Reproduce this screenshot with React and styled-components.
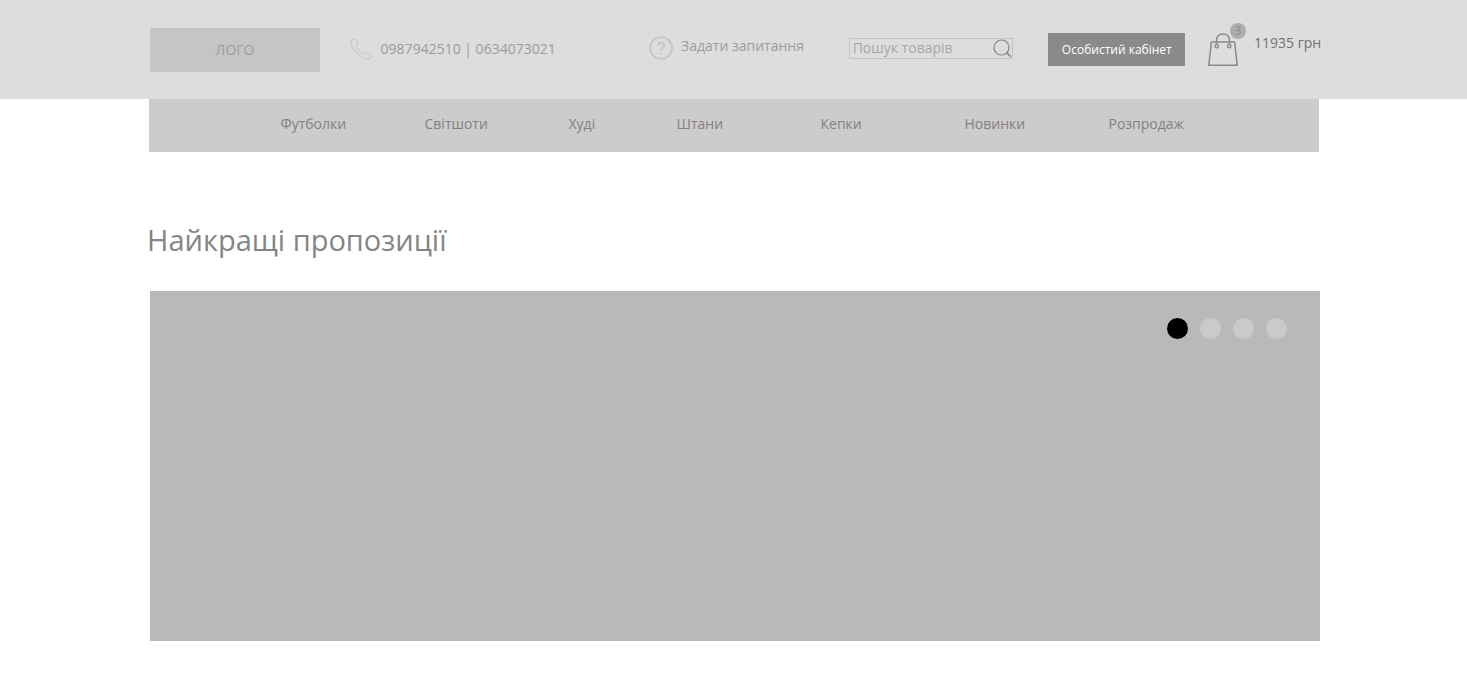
import React, { useState } from 'react';
import styled, { createGlobalStyle } from 'styled-components';

const categories = [
  'Футболки',
  'Світшоти',
  'Худі',
  'Штани',
  'Кепки',
  'Новинки',
  'Розпродаж',
];

const slides = [1, 2, 3, 4];

const PhoneIcon = () => (
  <svg width="22" height="22" viewBox="0 0 22 22" fill="none" stroke="#c3cad2" strokeWidth="1.2">
    <path d="M1.6 2.4C2.6 1 4.4.6 5.4 1.4C6.4 2.3 7.6 4 7.8 5.2C7.9 6.6 6.2 7.2 6.3 8.4C6.6 10 8 11.6 9.4 13C10.9 14.4 12.3 15.6 13.6 15.8C14.9 15.9 15.4 14.2 16.8 14.3C18.2 14.6 19.8 15.8 20.8 16.8C21.6 18 21 19.6 19.8 20.4C18.6 21.2 17 21.3 15.6 20.8C12.4 19.6 9.2 17.4 6.6 14.8C4 12.2 2 9.2 1 6.2C.6 4.8.8 3.4 1.6 2.4Z" />
  </svg>
);

const QuestionIcon = () => (
  <svg width="24" height="24" viewBox="0 0 24 24" fill="none" stroke="#c4c8cd">
    <circle cx="12" cy="12" r="11" strokeWidth="2" />
    <path d="M8.9 9.6C8.9 7.6 10.3 6.7 12 6.7C13.8 6.7 15.1 7.8 15.1 9.4C15.1 11.8 12 11.6 12 14.8" strokeWidth="2" />
    <circle cx="12" cy="17.8" r="1.3" fill="#c4c8cd" stroke="none" />
  </svg>
);

const SearchIcon = () => (
  <svg width="19" height="19" viewBox="0 0 19 19" fill="none" stroke="#858585">
    <circle cx="8.5" cy="8.5" r="7.5" strokeWidth="1.2" />
    <path d="M13.6 13.6L17.8 17.8" strokeWidth="1.5" />
  </svg>
);

const BagIcon = () => (
  <svg width="30" height="34" viewBox="0 0 30 34" fill="none" stroke="#8a8a8a">
    <path d="M3.4 9H26.6L29.2 32.3H.8Z" strokeWidth="1.5" />
    <path d="M8.5 12V7.5C8.5 3.6 11 1 15 1C19 1 21.5 3.6 21.5 7.5V12" strokeWidth="1.5" />
    <circle cx="8.7" cy="13.2" r="1.7" strokeWidth="1.3" />
    <circle cx="21.3" cy="13.2" r="1.7" strokeWidth="1.3" />
  </svg>
);

const App = () => {
  const [active, setActive] = useState(1);
  const [query, setQuery] = useState('');

  return (
    <>
      <GlobalStyle />
      <Header>
        <HeaderGrid>
          <Logo href="#">ЛОГО</Logo>
          <Phones>
            <PhoneIcon />
            <span>0987942510 | 0634073021</span>
          </Phones>
          <Ask href="#ask">
            <QuestionIcon />
            <span>Задати запитання</span>
          </Ask>
          <Search onSubmit={(e) => e.preventDefault()}>
            <SearchInput
              type="text"
              aria-label="Пошук товарів"
              placeholder="Пошук товарів"
              value={query}
              onChange={(e) => setQuery(e.target.value)}
            />
            <SearchButton type="submit" aria-label="Пошук">
              <SearchIcon />
            </SearchButton>
          </Search>
          <AccountButton type="button">Особистий кабінет</AccountButton>
          <Cart href="#cart">
            <Bag>
              <BagIcon />
              <Badge>3</Badge>
            </Bag>
            <span>11935 грн</span>
          </Cart>
        </HeaderGrid>
      </Header>
      <Nav>
        {categories.map((name) => (
          <NavLink key={name} href="#">
            {name}
          </NavLink>
        ))}
      </Nav>
      <Main>
        <Title>Найкращі пропозиції</Title>
        <Banner>
          {slides.map((slide) => (
            <Dot
              key={slide}
              type="button"
              aria-label={`Слайд ${slide}`}
              $active={slide === active}
              onClick={() => setActive(slide)}
            />
          ))}
        </Banner>
      </Main>
    </>
  );
};

export default App;

const GlobalStyle = createGlobalStyle`
  * {
    box-sizing: border-box;
  }
  body {
    margin: 0;
    background-color: #ffffff;
    font-family: 'Open Sans', 'Noto Sans', sans-serif;
    font-size: 14px;
    line-height: 20px;
    color: #858080;
  }
  a {
    color: inherit;
    text-decoration: none;
  }
  button,
  input {
    font: inherit;
  }
  svg {
    display: block;
    flex-shrink: 0;
  }
`;
const Header = styled.header`
  background-color: #dddddd;
`;
const HeaderGrid = styled.div`
  display: grid;
  grid-template-columns: 200fr 300fr 200fr 200fr 160fr 114px;
  align-items: center;
  max-width: 1177px;
  margin: 0 auto;
  padding: 28px 0 27px 5px;
  color: #a09b9b;
  white-space: nowrap;
`;
const Logo = styled.a`
  display: flex;
  align-items: center;
  justify-content: center;
  width: 170px;
  height: 44px;
  background-color: #c5c5c5;
`;
const Phones = styled.div`
  display: flex;
  align-items: center;
  gap: 9px;
  margin-bottom: 2px;
`;
const Ask = styled.a`
  display: flex;
  align-items: flex-start;
  gap: 8px;
  margin-bottom: 4px;
`;
const Search = styled.form`
  display: flex;
  align-items: center;
  width: 164px;
  height: 21px;
  margin-bottom: 3px;
  border: 1px solid #c4c4c4;
`;
const SearchInput = styled.input`
  flex: 1;
  min-width: 0;
  height: 19px;
  padding: 0 0 2px 3px;
  border: none;
  outline: none;
  background: none;
  color: #858080;
  &::placeholder {
    color: #aba4a4;
    opacity: 1;
  }
`;
const SearchButton = styled.button`
  padding: 0;
  border: none;
  background: none;
  cursor: pointer;
`;
const AccountButton = styled.button`
  justify-self: start;
  width: 137px;
  height: 33px;
  margin-bottom: 1px;
  padding: 0;
  border: none;
  background-color: #8a8a8a;
  color: #ffffff;
  font-size: 12px;
  cursor: pointer;
`;
const Cart = styled.a`
  display: flex;
  align-items: flex-start;
  gap: 16px;
  color: #757070;
`;
const Bag = styled.div`
  position: relative;
`;
const Badge = styled.span`
  position: absolute;
  top: -10px;
  right: -8px;
  width: 16px;
  height: 16px;
  border-radius: 50%;
  background-color: #adadad;
  color: #8d8d8d;
  font-size: 12px;
  line-height: 16px;
  text-align: center;
`;
const Nav = styled.nav`
  display: grid;
  grid-template-columns: 4fr 4fr 3fr 4fr 4fr 4fr 3fr;
  max-width: 1170px;
  margin: 0 auto;
  padding: 15px 102px 18px 132px;
  background-color: #cccccc;
`;
const NavLink = styled.a`
  justify-self: start;
`;
const Main = styled.main`
  max-width: 1173px;
  margin: 0 auto;
`;
const Title = styled.h1`
  margin: 68px 0 31px;
  font-size: 29px;
  font-weight: 400;
  line-height: 40px;
  color: #858585;
`;
const Banner = styled.section`
  display: flex;
  align-items: flex-start;
  justify-content: flex-end;
  gap: 12px;
  height: 350px;
  margin-left: 3px;
  padding: 27px 33px;
  background-color: #b9b9b9;
`;
const Dot = styled.button`
  width: 21px;
  height: 21px;
  padding: 0;
  border: none;
  border-radius: 50%;
  background-color: ${({ $active }) => ($active ? '#000000' : '#cacaca')};
  cursor: pointer;
`;
